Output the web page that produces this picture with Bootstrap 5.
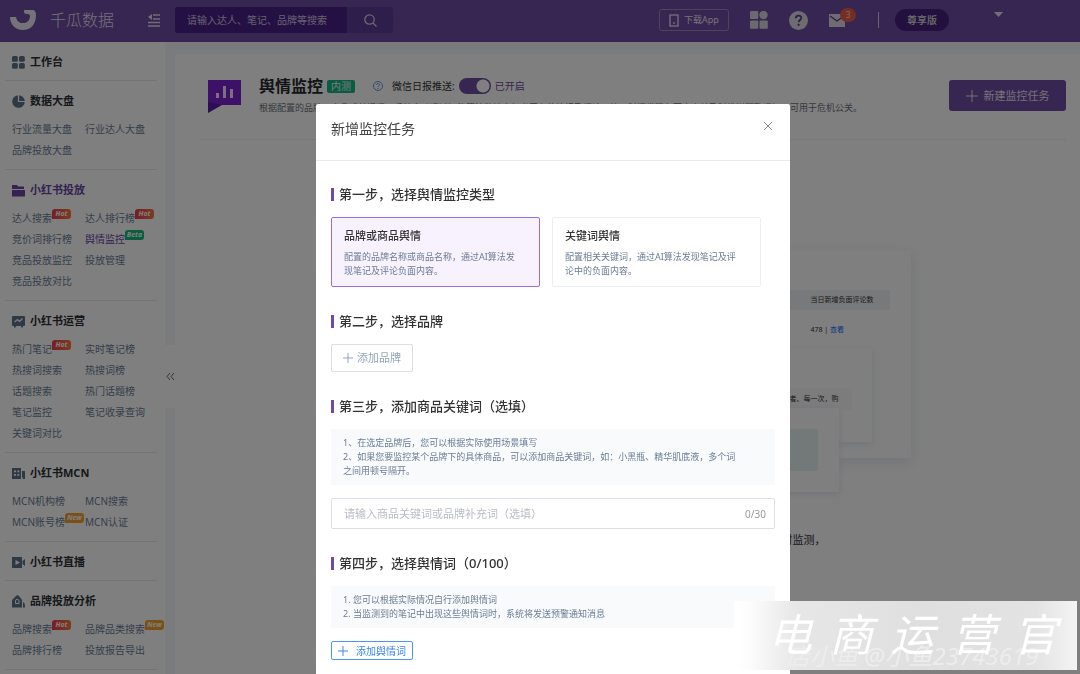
<!DOCTYPE html>
<html lang="zh-CN">
<head>
<meta charset="utf-8">
<meta name="viewport" content="width=device-width, initial-scale=1">
<title>千瓜数据 - 舆情监控</title>
<link href="https://cdn.jsdelivr.net/npm/bootstrap@5.3.0/dist/css/bootstrap.min.css" rel="stylesheet">
<style>
:root { --brand: #6e4aa4; --slate: #6b7c96; }
body { font-family: "Noto Sans", "Noto Sans CJK SC", sans-serif; font-size: 10px; line-height: 14px; color: #333; background: #f4f6fa; height: 100vh; overflow: hidden; }
a { text-decoration: none; color: inherit; }
svg { display: block; flex-shrink: 0; }
.topbar { background: var(--brand); height: 42px; color: #e6e0ee; padding-left: 10px; padding-right: 77px; }
.topbar > * { margin-top: -2px; }
.brand-name { font-size: 16px; line-height: 24px; font-weight: 300; margin-left: 14px; }
.fold-icon { margin-left: 33px; }
.search-box { width: 218px; height: 26px; margin-left: 14px; border-radius: 3px; overflow: hidden; background: #5c3c96; }
.search-box input { background: #4a2088; border: 0; color: #ddd; width: 172px; padding: 0 12px; font-size: 10px; }
.search-box input::placeholder { color: #cfc4e2; }
.search-box button { border: 0; background: none; color: #d8d0e4; width: 46px; }
.app-btn { border: 1px solid #9c86be; border-radius: 3px; width: 70px; height: 22px; background: none; color: #ebe6f2; font-size: 9px; padding: 0; gap: 5px; }
.tool-icon { margin-left: 21px; }
.bar-rule { margin-left: 33px; width: 1px; height: 16px; background: #cfc6da; }
.caret-icon { margin-left: 45px; align-self: flex-start; padding-top: 14px; height: 19px; }
.msg-badge { position: absolute; left: 11px; top: -6px; width: 16px; height: 14px; border-radius: 7px; background: #e85c4a; color: #ffd9b0; font-size: 9px; text-align: center; }
.plan-pill { background: #48207c; border-radius: 11px; height: 22px; width: 54px; font-weight: 500; color: #ddd; }
.side { width: 165px; background: #fff; flex-shrink: 0; color: var(--slate); }
.side-group { margin: 0 8px 0 5px; padding: 10px 0 8px 7px; border-bottom: 1px solid #e6e8ec; }
.side-title { height: 20px; font-size: 11px; line-height: 20px; font-weight: 700; color: #2d3036; margin: 0; gap: 5px; }
.side-title svg { color: #5d7288; }
.side-title.current, .side-title.current svg, .side-links .current { color: #6a45a5; }
.side-links { display: grid; grid-template-columns: 73px 1fr; list-style: none; padding: 0; margin: 8px 0 0; }
.side-links a { position: relative; line-height: 21px; white-space: nowrap; display: inline-block; font-size: 10px; }
.tag { position: absolute; left: 100%; top: 1px; width: 19px; height: 10px; line-height: 9px; border-radius: 3px 3px 3px 0; font-size: 7px; font-weight: 700; font-style: italic; text-align: center; color: #fff; }
.tag-hot { background: linear-gradient(90deg, #f0384e, #f77b3c); }
.tag-new { background: #f5a02c; }
.tag-beta { background: #12b878; }
.gutter { width: 10px; flex-shrink: 0; padding-top: 303px; }
.gutter button { width: 10px; height: 63px; background: #fff; border: 0; padding: 0; color: #667; }
.board { background: #fff; margin-top: 12px; padding: 24px 14px 0 25px; }
.board-head { padding: 0 0 24px 8px; border-bottom: 1px solid #eceef2; }
.board-mark, .new-task { margin-top: 2px; }
.board-intro { margin-left: 18px; }
.board-title { font-size: 16px; line-height: 16px; font-weight: 700; margin: 0; color: #26282c; }
.beta-badge { background: #16b585; color: #e6fff6; font-size: 10px; line-height: 13px; width: 28px; text-align: center; border-radius: 2px; margin-left: 4px; }
.help-icon { margin: 0 9px 0 18px; }
.board-desc { font-size: 9px; color: #6b7280; margin: 7px 0 0; white-space: nowrap; }
.push-switch.form-check-input, .push-switch.form-check-input:checked { width: 32px; height: 16px; margin: 0 4px 0 4px; border: 0; border-radius: 8px; background: radial-gradient(circle at 24px 8px, #fff 6px, transparent 7px) var(--brand); }
.push-state { color: var(--brand); }
.new-task { background: var(--brand); color: #e8e2f0; border: 0; border-radius: 3px; width: 117px; height: 31px; font-size: 11px; gap: 6px; }
/* Stack of sample panels shown while no task exists */
.sample-wrap { padding-right: 11px; }
.sample { position: relative; width: 566px; height: 208px; margin: 110px auto 0; padding-top: 40px; background: #fff; box-shadow: 0 4px 14px #e2e6ee; font-size: 7px; }
.sample-row { height: 20px; margin: 0 21px; }
.sample-row span { width: 79px; }
.sample-row.sample-th { background: #f1f3f6; margin-bottom: 13px; }
.sample-panel { position: absolute; background: #fff; box-shadow: 0 2px 8px #e2e6ee; }
.panel-mid { left: 60px; right: 39px; top: 98px; height: 94px; padding: 40px 20px 0; }
.panel-mid div { background: #f8f9fb; height: 22px; line-height: 22px; padding-right: 13px; text-align: right; }
.panel-front { left: 30px; right: 72px; top: 158px; height: 84px; padding: 21px; }
.panel-front div { height: 42px; background: #e6f2f0; }
.sample-text { font-size: 11px; text-align: center; margin-top: 75px; }
.task-modal { padding-left: 26px; overflow: hidden; }
.task-modal .modal-dialog { width: 474px; max-width: 474px; margin-top: 104px; }
.task-modal .modal-content { border: 0; border-radius: 2px; }
.task-modal .modal-header { height: 57px; padding: 0 16px 6px 15px; border-color: #e8eaee; border-radius: 0; }
.task-modal .modal-title { font-size: 14px; line-height: 20px; font-weight: 400; color: #444; }
.task-modal .close-x { border: 0; background: none; padding: 0; margin-bottom: 6px; color: #888; }
.task-modal .modal-body { padding: 24px 15px 40px; }
.step-title { font-size: 13px; line-height: 18px; font-weight: 500; margin: 0 0 14px; color: #333; gap: 5px; }
.step-title::before { content: ""; width: 3px; height: 13px; background: #7148a4; }
.step { margin-bottom: 25px; }
.kind-list { display: grid; grid-template-columns: 209px 209px; gap: 12px; }
.kind { border: 1px solid #eceef2; background: #fff; border-radius: 2px; height: 70px; padding: 10px 20px 10px 12px; text-align: left; font-size: 9px; color: var(--slate); }
.kind.selected { border-color: #9b6be0; background: #f8f2ff; }
.kind strong { display: block; font-size: 11px; line-height: 16px; font-weight: 500; color: #333; margin-bottom: 6px; }
.line-btn { border: 1px solid #dcdfe6; border-radius: 2px; background: #fff; color: #94a5bd; width: 82px; height: 28px; font-size: 11px; gap: 4px; padding: 0; }
.line-btn.blue { border-color: #4e96f5; color: #3a86f0; height: 19px; font-size: 10px; gap: 8px; }
.note { background: #f8fafc; color: var(--slate); font-size: 9px; padding: 7px 36px 7px 12px; margin-bottom: 13px; }
.word-input { border: 1px solid #dcdfe6; border-radius: 2px; height: 31px; padding: 0 8px 0 12px; }
.word-input input { border: 0; padding: 0; flex: 1; font-size: 11px; min-width: 0; }
.word-input input::placeholder { color: #b9bdc7; }
.word-input span { color: #999; font-size: 10px; }
.stamp { position: fixed; right: 3px; bottom: 4px; z-index: 2000; width: 343px; height: 69px; background: linear-gradient(90deg, #fff 0, #fdfdfd 4%, #e7e7e7 18%, #dfdfdf 55%, #e3e3e3 88%, #f4f4f4); color: #fff; pointer-events: none; }
.stamp-main { font-size: 44px; line-height: 66px; font-style: italic; padding: 0 20px 0 34px; }
.stamp-sub { position: absolute; left: 52px; bottom: 0; font-size: 24px; line-height: 28px; font-style: italic; color: #ededed; white-space: nowrap; }
</style>
</head>
<body>
<header class="topbar d-flex align-items-center">
  <svg width="26" height="20" viewBox="0 0 26 20" fill="#eae6ef"><path d="M0 7c2 0 4 0 6 0 1 4 3 6 7 6 4 0 6-2 7-6 0-3-1-3-4-3-2 0-2-3-2-4h8c3 0 4 2 4 5 0 9-5 15-13 15S0 14 0 7z"/></svg>
  <span class="brand-name">千瓜数据</span>
  <svg class="fold-icon" width="14" height="14" viewBox="0 0 14 14" fill="none" stroke="#e0dae8"><path d="M6 2h7M6 6h7M1 9.500h12M1 13h12" stroke-width="1.500"/><path d="M5 1v6L1 4z" fill="#e0dae8" stroke="none"/></svg>
  <form class="search-box d-flex" onsubmit="return false">
    <input type="text" placeholder="请输入达人、笔记、品牌等搜索" aria-label="搜索">
    <button type="submit" aria-label="搜索" class="d-flex align-items-center justify-content-center"><svg width="13" height="13" viewBox="0 0 13 13" fill="none" stroke="currentColor" stroke-width="1.3"><circle cx="5.5" cy="5.5" r="4.7"/><path d="M9 9l3.5 3.5"/></svg></button>
  </form>
  <button type="button" class="app-btn d-flex align-items-center justify-content-center ms-auto"><svg width="10" height="13" viewBox="0 0 10 13" fill="none" stroke="currentColor" stroke-width="1.3"><rect x="1" y="1" width="8" height="11"/><path d="M5 8v2"/></svg>下载App</button>
  <svg class="tool-icon" width="18" height="18" viewBox="0 0 18 18" fill="#d9d3e0"><rect width="8.300" height="8" rx="1"/><circle cx="13.500" cy="4" r="4.200"/><rect y="9.500" width="8.300" height="8.300" rx="1"/><rect x="9.500" y="9.500" width="8.300" height="8.300" rx="1"/></svg>
  <svg class="tool-icon" width="19" height="19" viewBox="0 0 19 19"><circle cx="9.500" cy="9.500" r="9.500" fill="#ddd7e4"/><path d="M6.700 7.300c0-3.700 5.800-3.500 5.600-.3-.1 2-2.700 2-2.700 4.300" fill="none" stroke="#5a3a87" stroke-width="1.700"/><circle cx="9.600" cy="13.800" r="1.100" fill="#5a3a87"/></svg>
  <div class="tool-icon position-relative"><svg width="16" height="13" viewBox="0 0 16 13"><path d="M0 0h16v13H0z" fill="#ded8e5"/><path d="M1 2l7 5 7-5" fill="none" stroke="#5a3a87" stroke-width="1.300"/></svg><span class="msg-badge">3</span></div>
  <span class="bar-rule"></span>
  <span class="plan-pill d-flex align-items-center justify-content-center ms-3">尊享版</span>
  <svg class="caret-icon" width="9" height="5" viewBox="0 0 9 5" fill="#e6e0ec"><path d="M0 0h9L4.500 5z"/></svg>
</header>

<div class="d-flex" style="min-height:calc(100vh - 42px)">
  <nav class="side" aria-label="主导航">
    <section class="side-group"><h2 class="side-title d-flex align-items-center"><svg width="13" height="13" viewBox="0 0 13 13" fill="currentColor"><rect width="5.800" height="5.800" rx="1.500"/><rect x="7" width="5.800" height="5.800" rx="1.500"/><rect y="7" width="5.800" height="5.800" rx="1.500"/><rect x="7" y="7" width="5.800" height="5.800" rx="1.500"/></svg>工作台</h2></section>
    <section class="side-group"><h2 class="side-title d-flex align-items-center"><svg width="13" height="13" viewBox="0 0 13 13"><circle cx="6.500" cy="6.500" r="6.300" fill="currentColor"/><path d="M6.500 0v6.500H13" fill="none" stroke="#fff" stroke-width="1.200"/></svg>数据大盘</h2>
      <ul class="side-links"><li><a href="#">行业流量大盘</a></li><li><a href="#">行业达人大盘</a></li><li><a href="#">品牌投放大盘</a></li></ul></section>
    <section class="side-group"><h2 class="side-title current d-flex align-items-center"><svg width="13" height="13" viewBox="0 0 13 13" fill="currentColor"><path d="M0 1h5l1 1.500h6V5H0zM0 6h13v6.500H0z"/></svg>小红书投放</h2>
      <ul class="side-links"><li><a href="#">达人搜索<span class="tag tag-hot">Hot</span></a></li><li><a href="#">达人排行榜<span class="tag tag-hot">Hot</span></a></li><li><a href="#">竞价词排行榜</a></li><li><a href="#" class="current">舆情监控<span class="tag tag-beta">Beta</span></a></li><li><a href="#">竞品投放监控</a></li><li><a href="#">投放管理</a></li><li><a href="#">竞品投放对比</a></li></ul></section>
    <section class="side-group"><h2 class="side-title d-flex align-items-center"><svg width="13" height="13" viewBox="0 0 13 13"><path d="M1 1h11q1 0 1 1v8q0 1-1 1h-1v1.500H9.500L9 11H4l-.5 1.500H2V11H1q-1 0-1-1V2q0-1 1-1z" fill="currentColor"/><path d="M2.500 7l3-2.500 2 2 3-3" fill="none" stroke="#fff" stroke-width="1.200"/></svg>小红书运营</h2>
      <ul class="side-links"><li><a href="#">热门笔记<span class="tag tag-hot">Hot</span></a></li><li><a href="#">实时笔记榜</a></li><li><a href="#">热搜词搜索</a></li><li><a href="#">热搜词榜</a></li><li><a href="#">话题搜索</a></li><li><a href="#">热门话题榜</a></li><li><a href="#">笔记监控</a></li><li><a href="#">笔记收录查询</a></li><li><a href="#">关键词对比</a></li></ul></section>
    <section class="side-group"><h2 class="side-title d-flex align-items-center"><svg width="13" height="13" viewBox="0 0 13 13" fill="currentColor"><path fill-rule="evenodd" d="M0 1h9v11H0zM2 3.500v1.700h2V3.500zM5.300 3.500v1.700h2V3.500zM2 7v1.700h2V7zM5.300 7v1.700h2V7z"/><path d="M10 4h3v8h-2.200v-1.500H10z"/></svg>小红书MCN</h2>
      <ul class="side-links"><li><a href="#">MCN机构榜</a></li><li><a href="#">MCN搜索</a></li><li><a href="#">MCN账号榜<span class="tag tag-new">New</span></a></li><li><a href="#">MCN认证</a></li></ul></section>
    <section class="side-group"><h2 class="side-title d-flex align-items-center"><svg width="13" height="13" viewBox="0 0 13 13"><path d="M0 1h10v11H0zM10.500 5L13 3v7l-2.500-2z" fill="currentColor"/><path d="M3.500 4v5L8 6.500z" fill="#fff"/></svg>小红书直播</h2></section>
    <section class="side-group"><h2 class="side-title d-flex align-items-center"><svg width="13" height="13" viewBox="0 0 13 13"><path d="M0 12.500V6q0-1 1-2l3.500-3.500Q5.500 0 6.500.5L9 3.500q1 1 1 2v7zM11 7c2 1 2 3 2 5.500h-2z" fill="currentColor"/><path d="M3.500 6a1.700 1.700 0 0 1 3.500 0v2.500H3.500z" fill="none" stroke="#fff"/></svg>品牌投放分析</h2>
      <ul class="side-links"><li><a href="#">品牌搜索<span class="tag tag-hot">Hot</span></a></li><li><a href="#">品牌品类搜索<span class="tag tag-new">New</span></a></li><li><a href="#">品牌排行榜</a></li><li><a href="#">投放报告导出</a></li></ul></section>
  </nav>
  <div class="gutter"><button type="button" aria-label="收起导航"><svg width="10" height="9" viewBox="0 0 10 9" fill="none" stroke="currentColor"><path d="M5 1L2 4.500 5 8M9 1L6 4.500 9 8"/></svg></button></div>

  <main class="board flex-fill">
    <div class="board-head d-flex align-items-start">
      <svg class="board-mark" width="33" height="33" viewBox="0 0 33 33"><path d="M0 0h33v25H0z" fill="#7a22cf"/><path d="M0 22v11l14-8z" fill="#5a1baa"/><path d="M8 13h3v5H8zM15 6h3v12h-3zM22 9h3v9h-3z" fill="#efe4fb"/></svg>
      <div class="board-intro">
        <div class="d-flex align-items-center">
          <h1 class="board-title">舆情监控</h1><span class="beta-badge">内测</span>
          <svg class="help-icon" width="10" height="10" viewBox="0 0 10 10" fill="none" stroke="#6f8fdc"><circle cx="5" cy="5" r="4.500"/><path d="M3.500 4c0-2 3-2 3 0 0 1-1.500 1-1.500 2.200M5 7v1"/></svg>
          <label for="push">微信日报推送:</label>
          <input class="form-check-input push-switch" type="checkbox" role="switch" id="push" checked>
          <span class="push-state">已开启</span>
        </div>
        <p class="board-desc">根据配置的品牌、商品或关键词，系统自动通过智能算法监控小红书平台的笔记及评论，第一时间发现负面内容并及时推送预警通知，可用于危机公关。</p>
      </div>
      <button type="button" class="new-task d-flex align-items-center justify-content-center ms-auto"><svg width="12" height="12" viewBox="0 0 12 12" stroke="currentColor"><path d="M6 0v12M0 6h12"/></svg>新建监控任务</button>
    </div>
    <div class="sample-wrap">
      <div class="sample">
        <div class="sample-row sample-th d-flex align-items-center justify-content-end"><span>当日新增负面评论数</span></div>
        <div class="sample-row d-flex justify-content-end"><span>478 | <a href="#" class="text-primary">查看</a></span></div>
        <div class="sample-panel panel-mid"><div>适合每一位爱美的消费者、每一次，购</div></div>
        <div class="sample-panel panel-front"><div></div></div>
      </div>
      <p class="sample-text">添加监控任务后，系统将会对品牌及商品相关的笔记与评论进行全天候实时监测，</p>
    </div>
  </main>
</div>

<div class="modal-backdrop show"></div>
<div class="modal d-block task-modal" role="dialog" aria-labelledby="task-title">
  <div class="modal-dialog">
    <div class="modal-content">
      <div class="modal-header">
        <h2 class="modal-title" id="task-title">新增监控任务</h2>
        <button type="button" class="close-x" aria-label="关闭"><svg width="12" height="12" viewBox="0 0 12 12" stroke="currentColor"><path d="M2 2l8 8M10 2l-8 8"/></svg></button>
      </div>
      <div class="modal-body">
        <section class="step">
          <h3 class="step-title d-flex align-items-center">第一步，选择舆情监控类型</h3>
          <div class="kind-list">
            <button type="button" class="kind selected"><strong>品牌或商品舆情</strong>配置的品牌名称或商品名称，通过AI算法发现笔记及评论负面内容。</button>
            <button type="button" class="kind"><strong>关键词舆情</strong>配置相关关键词，通过AI算法发现笔记及评论中的负面内容。</button>
          </div>
        </section>
        <section class="step">
          <h3 class="step-title d-flex align-items-center">第二步，选择品牌</h3>
          <button type="button" class="line-btn d-flex align-items-center justify-content-center"><svg width="10" height="10" viewBox="0 0 10 10" stroke="currentColor"><path d="M5 0v10M0 5h10"/></svg>添加品牌</button>
        </section>
        <section class="step">
          <h3 class="step-title d-flex align-items-center">第三步，添加商品关键词（选填）</h3>
          <div class="note">1、在选定品牌后，您可以根据实际使用场景填写<br>2、如果您要监控某个品牌下的具体商品，可以添加商品关键词，如：小黑瓶、精华肌底液，多个词之间用顿号隔开。</div>
          <div class="word-input d-flex align-items-center"><input type="text" placeholder="请输入商品关键词或品牌补充词（选填）" aria-label="商品关键词"><span>0/30</span></div>
        </section>
        <section class="step">
          <h3 class="step-title d-flex align-items-center">第四步，选择舆情词（0/100）</h3>
          <div class="note">1. 您可以根据实际情况自行添加舆情词<br>2. 当监测到的笔记中出现这些舆情词时，系统将发送预警通知消息</div>
          <button type="button" class="line-btn blue d-flex align-items-center justify-content-center"><svg width="10" height="10" viewBox="0 0 10 10" stroke="currentColor"><path d="M5 0v10M0 5h10"/></svg>添加舆情词</button>
        </section>
      </div>
    </div>
  </div>
</div>

<div class="stamp">
  <div class="stamp-sub">店小鱼 @小鱼23743619</div>
  <div class="stamp-main position-relative d-flex justify-content-between"><span>电</span><span>商</span><span>运</span><span>营</span><span>官</span></div>
</div>
<script src="https://cdn.jsdelivr.net/npm/bootstrap@5.3.0/dist/js/bootstrap.bundle.min.js"></script>
</body>
</html>
